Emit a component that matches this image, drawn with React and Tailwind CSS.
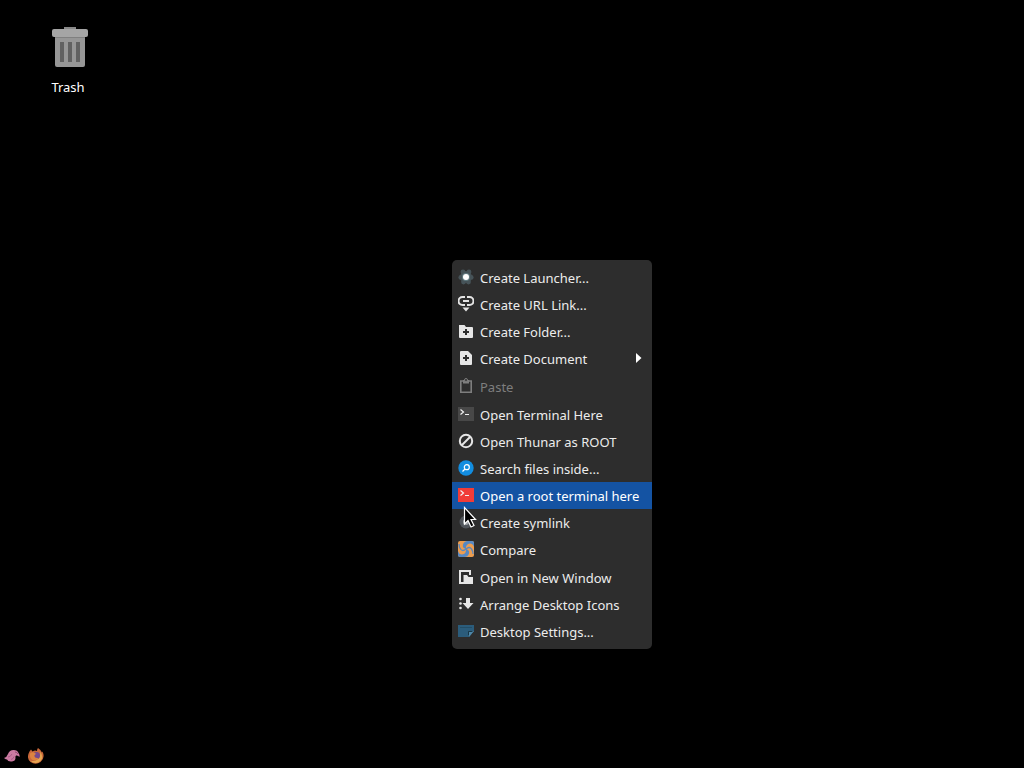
import React from 'react'

const LauncherIcon = () => (
  <svg width="16" height="16" viewBox="0 0 16 16">
    <g fill="#465358">
      <circle cx="8" cy="8" r="6" />
      <circle cx="5" cy="3" r="2.4" />
      <circle cx="11" cy="3" r="2.4" />
      <circle cx="13.2" cy="8.4" r="2.4" />
      <circle cx="10.500" cy="13" r="2.4" />
      <circle cx="5.500" cy="13" r="2.4" />
      <circle cx="2.8" cy="8.4" r="2.4" />
    </g>
    <circle cx="8" cy="8" r="4" fill="#617a80" />
    <circle cx="8" cy="8" r="3" fill="#fff" />
  </svg>
)

const LinkIcon = () => (
  <svg width="16" height="16" viewBox="0 0 16 16">
    <path d="M7 1H4.500a3.500 3.500 0 0 0 0 8H7M9 1h2.500a3.500 3.500 0 0 1 0 8H9M5 5h6" fill="none" stroke="#e4e4e4" strokeWidth="2" />
    <path d="M4.500 11.500h7L8 15.500z" fill="#e4e4e4" />
  </svg>
)

const FolderIcon = () => (
  <svg width="16" height="16" viewBox="0 0 16 16">
    <path d="M1 2h5.500L8 4h6q1 0 1 1v9q0 1-1 1H2q-1 0-1-1z" fill="#e6e6e6" />
    <path d="M8 6v6M5 9h6" stroke="#2d2d2d" strokeWidth="2" />
  </svg>
)

const DocumentIcon = () => (
  <svg width="16" height="16" viewBox="0 0 16 16">
    <path d="M3 1h7l4 4v9q0 1-1 1H3q-1 0-1-1V2q0-1 1-1z" fill="#e6e6e6" />
    <path d="M8 5v6M5 8h6" stroke="#2d2d2d" strokeWidth="2" />
  </svg>
)

const PasteIcon = () => (
  <svg width="16" height="16" viewBox="0 0 16 16" fill="none" stroke="#7e7e7e">
    <path d="M2.800 3h10.400v11.200H2.800z" strokeWidth="1.600" />
    <path d="M5 2h6v3.500H5z" fill="#7e7e7e" stroke="none" />
    <circle cx="8" cy="2" r="1.500" fill="#2d2d2d" />
  </svg>
)

const TerminalIcon = ({ color }) => (
  <svg width="16" height="16" viewBox="0 0 16 16">
    <path d="M0 1h16v14H0z" fill={color} />
    <path d="M2.500 3.500l3 2.500-3 2.500M7 8.500h4" fill="none" stroke="#f2f2f2" strokeWidth="1.200" />
  </svg>
)

const ForbiddenIcon = () => (
  <svg width="16" height="16" viewBox="0 0 16 16" fill="none" stroke="#e6e6e6" strokeWidth="2">
    <circle cx="8" cy="8" r="6.200" />
    <path d="M4 12l8-8" />
  </svg>
)

const SearchIcon = () => (
  <svg width="16" height="16" viewBox="0 0 16 16">
    <circle cx="8" cy="8" r="7.700" fill="#128de0" />
    <circle cx="8.800" cy="7.200" r="2.500" fill="none" stroke="#fff" strokeWidth="1.200" />
    <path d="M7 9l-2.500 2.500" stroke="#fff" strokeWidth="1.200" />
  </svg>
)

const SymlinkIcon = () => (
  <svg width="16" height="16" viewBox="0 0 16 16">
    <circle cx="8" cy="8" r="6.500" fill="#50555b" />
    <circle cx="8" cy="8" r="3" fill="#a0a4a8" />
  </svg>
)

const CompareIcon = () => (
  <svg width="16" height="16" viewBox="0 0 16 16">
    <rect width="16" height="16" rx="2" fill="#ec9d50" />
    <path d="M8 8Q4 7 5 3.500 6 0 10 0h4q2 0 2 2v4q-1-3.500-4-3.500Q7.500 3 8 8z" fill="#5588c4" />
    <path d="M8 8q4 1 3 4.500Q10 16 6 16H2q-2 0-2-2v-4q1 3.500 4 3.500Q8.500 13 8 8z" fill="#5588c4" />
    <path d="M8 8Q4.500 11 2.500 8 1 6 1 3M8 8q3.500-3 5.500 0 1.500 2 1.500 5" fill="none" stroke="#5588c4" strokeWidth="1.300" />
  </svg>
)

const WindowIcon = () => (
  <svg width="16" height="16" viewBox="0 0 16 16">
    <path d="M6 14H2V2h10v4" fill="none" stroke="#e6e6e6" strokeWidth="2" />
    <path d="M5.500 6H9l1.500 2H15v7H5.500z" fill="#e6e6e6" />
  </svg>
)

const ArrangeIcon = () => (
  <svg width="16" height="16" viewBox="0 0 16 16" fill="#e6e6e6">
    <circle cx="2.500" cy="3" r="1.300" />
    <circle cx="2.500" cy="7.500" r="1.300" />
    <circle cx="2.500" cy="12" r="1.300" />
    <path d="M8 2h4v5h3.500L10 13 4.500 7H8z" />
  </svg>
)

const DesktopIcon = () => (
  <svg width="16" height="16" viewBox="0 0 16 16">
    <path d="M0 2h16v6l-5 6H0z" fill="#2b5c7b" />
    <path d="M2 4.500h12" stroke="#234d66" />
    <path d="M16 8l-5 6V8z" fill="#4f87a8" />
    <path d="M14.500 8.500h-4v3.500" fill="none" stroke="#183747" />
  </svg>
)

const TrashIcon = () => (
  <svg width="36" height="42" viewBox="0 0 36 42">
    <path d="M12 1h12v3H12z" fill="#888" />
    <path d="M3 10h30v29q0 2-2 2H5q-2 0-2-2z" fill="#969696" />
    <path d="M2 3h32q2 0 2 2v4q0 2-2 2H2q-2 0-2-2V5q0-2 2-2z" fill="#a5a5a5" />
    <path d="M3 11h30v1H3z" fill="#808080" />
    <path d="M8 16h4v20H8zM16 16h4v20h-4zM24 16h4v20h-4z" fill="#616161" />
  </svg>
)

const BirdIcon = () => (
  <svg width="16" height="16" viewBox="0 0 16 16">
    <path d="M0 10q3-1 4-4 1.500-4 5.500-4 4 0 5 3Q16 7 15.500 9q-1.500-2-3.500-1.500-1 1-.5 2.500 0 3-3.500 3.500Q4 14 3 11.500 2 11.500 0 10z" fill="#cb7aa2" />
    <path d="M4 9q2.500 0 4-3M7 11.500q2.500-.5 3-3" fill="none" stroke="#a85c86" />
    <path d="M11 4q2 0 3 2" fill="none" stroke="#8d496f" />
  </svg>
)

const FirefoxIcon = () => (
  <svg width="16" height="16" viewBox="0 0 16 16">
    <path d="M1.500 3.500L3 1.500l1.500 2Q7 2 9 3q0-2 1-3 3 2 4 4.500l.5-1q3 6.500-2 10.500-5 3.500-10 0-4.500-4-1-10.500z" fill="#c9683a" />
    <path d="M12 3.500q4 5 1 9-5 5-11 0 5 1.500 8-1.500t2-7.500z" fill="#e5a551" />
    <circle cx="8.500" cy="7.500" r="3.500" fill="#75498c" />
    <path d="M2 5.500q3-2 4.500-.5l2 1q-2.500.5-2 2.500 1 2 4 1.500-2 3-6 2-3-2-2.500-6.500z" fill="#dc8440" />
  </svg>
)

const Cursor = () => (
  <svg className="pointer-events-none absolute left-[11px] top-[246px]" width="14" height="23" viewBox="0 0 14 23">
    <path d="M1.500 1.500v16.500l3.500-3.500 3 6.500 3-1.500-3-6H12.500z" fill="#000" stroke="#fff" strokeWidth="1.200" />
  </svg>
)

const groups = [
  [
    { label: 'Create Launcher...', icon: <LauncherIcon /> },
    { label: 'Create URL Link...', icon: <LinkIcon /> },
    { label: 'Create Folder...', icon: <FolderIcon /> },
    { label: 'Create Document', icon: <DocumentIcon />, submenu: true },
  ],
  [{ label: 'Paste', icon: <PasteIcon />, disabled: true }],
  [
    { label: 'Open Terminal Here', icon: <TerminalIcon color="#484848" /> },
    { label: 'Open Thunar as ROOT', icon: <ForbiddenIcon /> },
    { label: 'Search files inside...', icon: <SearchIcon /> },
    { label: 'Open a root terminal here', icon: <TerminalIcon color="#f13c38" />, active: true },
    { label: 'Create symlink', icon: <SymlinkIcon /> },
    { label: 'Compare', icon: <CompareIcon /> },
  ],
  [
    { label: 'Open in New Window', icon: <WindowIcon /> },
    { label: 'Arrange Desktop Icons', icon: <ArrangeIcon /> },
    { label: 'Desktop Settings...', icon: <DesktopIcon /> },
  ],
]

function MenuItem({ item }) {
  return (
    <button
      role="menuitem"
      disabled={item.disabled}
      aria-haspopup={item.submenu ? 'menu' : undefined}
      className={`flex h-[27px] w-full items-center gap-1.5 px-1.5 text-left whitespace-nowrap ${
        item.active ? 'bg-[#1453a3] text-white' : item.disabled ? 'text-[#7e7e7e]' : 'text-[#ececec]'
      }`}
    >
      <span className="shrink-0 pb-0.5">{item.icon}</span>
      <span className="flex-1">{item.label}</span>
      {item.submenu && (
        <svg className="mr-1" width="6" height="12" viewBox="0 0 6 12">
          <path d="M0 0L5.500 5L0 10z" fill="#fff" />
        </svg>
      )}
    </button>
  )
}

function ContextMenu() {
  return (
    <div role="menu" className="absolute left-[452px] top-[260px] flex w-[200px] flex-col gap-px rounded-[5px] bg-[#2d2d2d] py-1">
      {groups.map((items, i) => (
        <div key={i} role="group">
          {items.map((item) => (
            <MenuItem key={item.label} item={item} />
          ))}
        </div>
      ))}
      <Cursor />
    </div>
  )
}

export default function App() {
  return (
    <div className="relative flex min-h-screen flex-col justify-between bg-black font-['Noto_Sans',sans-serif] text-[13px] leading-5 text-white">
      <main className="px-8 py-[26px]">
        <button className="flex w-[72px] flex-col items-center gap-[9px]">
          <span className="pl-1"><TrashIcon /></span>
          <span>Trash</span>
        </button>
      </main>
      <ContextMenu />
      <footer className="flex gap-2 px-1 py-1">
        <button aria-label="Applications"><BirdIcon /></button>
        <button aria-label="Firefox"><FirefoxIcon /></button>
      </footer>
    </div>
  )
}
